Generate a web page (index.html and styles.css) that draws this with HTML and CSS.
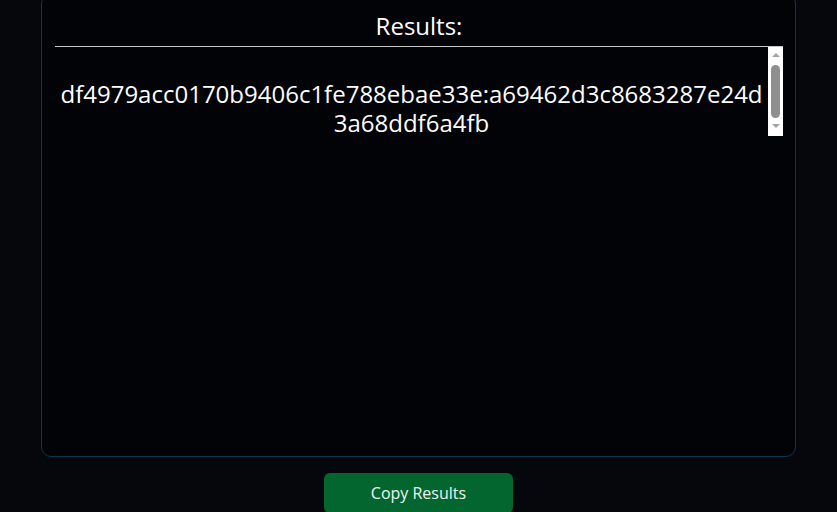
FILE: index.html
```html
<!DOCTYPE html>
<html lang="en">
<head>
  <meta charset="UTF-8" />
  <title>Results</title>
  <link rel="stylesheet" href="styles.css">
</head>
<body>

  <div class="page">
    <div class="results-card">
      <h2 class="results-title">Results:</h2>
      <div class="results-box">
        <div class="results-text" id="results">df4979acc0170b9406c1fe788ebae33e:a69462d3c8683287e24d3a68ddf6a4fb</div>
        <!-- Posuvník -->
        <div class="scrollbar" aria-hidden="true">
          <span class="arrow-up"></span>
          <span class="thumb"></span>
          <span class="arrow-down"></span>
        </div>
      </div>
    </div>

    <button class="copy-btn" onclick="copyResults()">Copy Results</button>
  </div>

<script>
  function copyResults() {
    const text = document.getElementById("results").textContent;
    if (navigator.clipboard) navigator.clipboard.writeText(text);
  }
</script>

</body>
</html>
```

FILE: styles.css
```css
body {
  font-family: 'Open Sans', 'Noto Sans', sans-serif;
  margin: 0;
  background: #05070c;
  color: #fff;
  min-height: 100vh;
}

.page {
  display: flex;
  flex-direction: column;
  align-items: center;
  gap: 16px;
  padding: 0 41px;
}

/* Karta s výsledkami */
.results-card {
  align-self: stretch;
  margin-top: -6px;
  background: #020307;
  border: 1px solid #0c3550;
  border-radius: 10px;
  padding: 0 12px 0 13px;
  height: 463px;
  box-sizing: border-box;
}

.results-title {
  margin: 0;
  padding: 14px 0 4px;
  font-size: 24px;
  font-weight: 400;
  line-height: 33px;
  text-align: center;
  border-bottom: 1px solid #c8c8c8;
}

.results-box {
  display: flex;
  height: 89px;
}

.results-text {
  flex: 1;
  overflow: hidden;
  padding: 33px 0 9px;
  font-size: 24px;
  line-height: 1.2;
  text-align: center;
  word-break: break-all;
}

/* Posuvník */
.scrollbar {
  width: 15px;
  background: #fff;
  display: flex;
  flex-direction: column;
  align-items: center;
  padding-top: 6px;
  box-sizing: border-box;
}

.arrow-up,
.arrow-down {
  width: 0;
  height: 0;
  border-left: 4px solid transparent;
  border-right: 4px solid transparent;
}
.arrow-up {
  border-bottom: 4px solid #a3a3a3;
}
.arrow-down {
  border-top: 4px solid #a3a3a3;
}

.thumb {
  width: 9px;
  height: 53px;
  margin: 8px 0 6px;
  background: #8f8f8f;
  border-radius: 5px;
}

.copy-btn {
  width: 189px;
  height: 40px;
  background-color: #02662e;
  border: none;
  border-radius: 6px;
  color: #eef5ee;
  font-family: inherit;
  font-size: 16px;
  cursor: pointer;
}
.copy-btn:hover {
  background-color: #015225;
}
```
